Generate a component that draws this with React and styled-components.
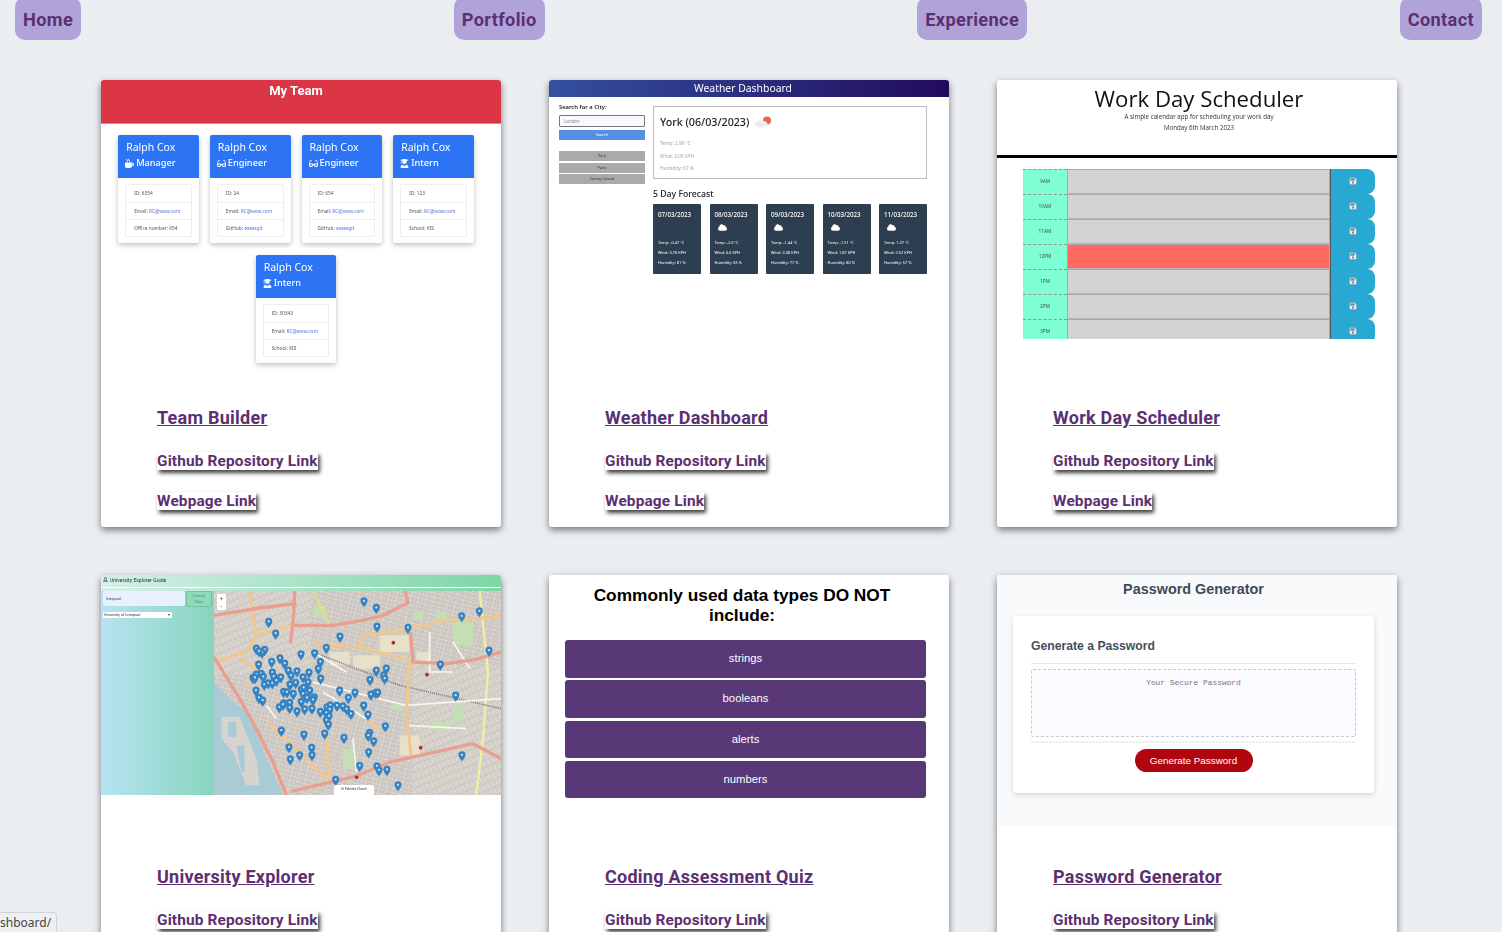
import React from 'react'
import styled, { createGlobalStyle } from 'styled-components'
import { FaMugHot, FaGlasses, FaUserGraduate, FaSave, FaCloud, FaRegUser } from 'react-icons/fa'

const GlobalStyle = createGlobalStyle`
    html, body {
        margin: 0;
        height: 932px;
        overflow: hidden;
        background: #ebeef1;
        font-family: Roboto, sans-serif;
    }
    * { box-sizing: border-box; }
`

const purple = '#5b2f72'

const Page = styled.div`
    height: 932px;
    overflow: hidden;
    position: relative;
`
const Nav = styled.nav`
    display: flex;
    justify-content: space-between;
    padding: 0 20px 0 15px;
    margin-top: -3px;
`
const NavButton = styled.a`
    height: 43px;
    padding: 2px 8px 0;
    display: flex;
    align-items: center;
    background: #b0a3d9;
    border-radius: 10px;
    color: ${purple};
    font: 700 18.2px Roboto, sans-serif;
    letter-spacing: 0.35px;
`
const Grid = styled.div`
    display: grid;
    grid-template-columns: repeat(3, 400px);
    gap: 48px;
    padding: 40px 0 0 101px;
`
const Card = styled.section`
    background: #fff;
    border-radius: 3px;
    height: 447px;
    box-shadow: 0 3px 7px rgba(0, 0, 0, 0.5);
    overflow: hidden;
`
const Shot = styled.div`
    height: ${(p) => p.$slot}px;
    overflow: hidden;
    filter: ${(p) => (p.$soft ? 'blur(0.35px)' : 'none')};
`
const CardText = styled.div`
    padding-left: 56px;
`
const ProjectTitle = styled.a`
    display: block;
    width: fit-content;
    color: ${purple};
    font-size: 18px;
    font-weight: 700;
    letter-spacing: 0.25px;
    line-height: 24px;
    text-decoration: underline;
    margin-bottom: 22px;
`
const ProjectLink = styled.a`
    display: block;
    width: fit-content;
    color: ${purple};
    background: #fff;
    font-size: 15.4px;
    font-weight: 700;
    letter-spacing: 0.15px;
    line-height: 18px;
    box-shadow: 2px 3px 4px rgba(0, 0, 0, 0.75);
    margin-bottom: 22px;
`

/* team builder */
const TeamHeader = styled.div`
    height: 44px;
    background: #dc3545;
    border-bottom: 1px solid #ee7a85;
    color: #fff;
    font: 700 13px Roboto, sans-serif;
    text-align: center;
    padding: 3px 10px 0 0;
`
const TeamWrap = styled.div`
    display: flex;
    flex-wrap: wrap;
    justify-content: center;
    gap: 12px 11px;
    padding: 11px 27px 0 17px;
`
const Person = styled.div`
    width: 80.7px;
    height: 108px;
    background: #fff;
    border-radius: 2px;
    box-shadow: 0 2px 5px rgba(0, 0, 0, 0.25);
`
const PersonHead = styled.div`
    height: 42.5px;
    background: #2d74f4;
    color: #fff;
    padding: 5px 8px 0;
    font-family: "Noto Sans", sans-serif;
    border-radius: 2px 2px 0 0;
`
const PersonName = styled.div`
    font-size: 10.5px;
    line-height: 15px;
`
const PersonRole = styled.div`
    display: flex;
    align-items: center;
    gap: 2px;
    font-size: 9.2px;
    font-weight: 500;
    line-height: 16px;
    margin-left: -1px;
`
const PersonList = styled.div`
    margin: 6px 7px 0;
    border: 1px solid #eee;
    border-radius: 2px;
`
const PersonLine = styled.div`
    height: 17px;
    padding-left: 8px;
    font: 4.8px/16px "Noto Sans", sans-serif;
    color: #555;
    white-space: nowrap;
    border-top: ${(p) => (p.$first ? 'none' : '1px solid #eee')};
    span { color: #4f74e0; }
`

/* weather */
const WeatherHeader = styled.div`
    height: 17px;
    background: linear-gradient(90deg, #34509f, #230b5c);
    color: #fff;
    font: 400 10.4px/16px "Noto Sans", sans-serif;
    text-align: center;
    padding-right: 12px;
`
const WeatherBody = styled.div`
    display: flex;
    gap: 8px;
    padding: 9px 22px 0 10px;
`
const WeatherSide = styled.div`
    width: 86px;
    margin-top: -3px;
`
const SideLabel = styled.div`
    font: 600 5.8px/9px "Noto Sans", sans-serif;
    color: #222;
    margin-bottom: 3px;
`
const CityInput = styled.div`
    height: 12px;
    border: 1px solid #777;
    border-radius: 1px;
    background: #f8f8ff;
    font: 4.4px/10px "Noto Sans", sans-serif;
    color: #888;
    padding-left: 4px;
    margin-bottom: 3px;
`
const SideButton = styled.div`
    height: ${(p) => p.$h}px;
    background: ${(p) => p.$bg};
    color: ${(p) => p.$fg};
    font: 3.8px/${(p) => p.$h}px "Noto Sans", sans-serif;
    text-align: center;
    margin-bottom: ${(p) => p.$mb}px;
`
const WeatherMain = styled.div`
    width: 274px;
`
const CurrentBox = styled.div`
    height: 73px;
    border: 1px solid #bdbdbd;
    padding: 7px 6px;
`
const CurrentTitle = styled.div`
    display: flex;
    align-items: center;
    gap: 5px;
    font: 500 10.7px/16px "Noto Sans", sans-serif;
    color: #222;
    margin-bottom: 7px;
`
const CurrentLine = styled.div`
    font: 4.8px/12.7px "Noto Sans", sans-serif;
    color: #a5a5a5;
`
const ForecastTitle = styled.div`
    font: 500 8.7px/12px "Noto Sans", sans-serif;
    color: #222;
    margin: 9px 0 4px;
`
const ForecastRow = styled.div`
    display: flex;
    justify-content: space-between;
`
const DayCard = styled.div`
    width: 48px;
    height: 70px;
    background: #2d3e50;
    border-radius: 1px;
    color: #fff;
    padding: 5px 5px 0;
`
const DayDate = styled.div`
    font: 500 6.2px/11px "Noto Sans", sans-serif;
    margin-bottom: 3px;
`
const DayIcon = styled.div`
    height: 9px;
    padding-left: 3px;
    margin-bottom: 6px;
    font-size: 9px;
    line-height: 9px;
`
const DayLine = styled.div`
    font: 3.9px/10px "Noto Sans", sans-serif;
    white-space: nowrap;
`
const DarkDot = styled.span`
    display: block;
    width: 5px;
    height: 5px;
    margin: 2px 0 0 2px;
    border-radius: 50%;
    background: #3b3f44;
`

/* scheduler */
const SchedHead = styled.div`
    height: 78px;
    border-bottom: 3px solid #000;
    text-align: center;
    color: #111;
    font-family: "Open Sans", sans-serif;
    padding: 6px 0 0 4px;
`
const SchedTitle = styled.div`
    font-size: 22.2px;
    line-height: 26px;
`
const SchedSub = styled.div`
    font-size: 6.2px;
    line-height: 10.5px;
    color: #333;
`
const SchedRows = styled.div`
    margin: 11px 22px 0 26px;
    height: 170px;
    overflow: hidden;
`
const SchedRow = styled.div`
    display: grid;
    grid-template-columns: 44px 1fr 45px;
    height: 25px;
`
const HourCell = styled.div`
    background: #7fffd4;
    border-top: 1px dashed #9a8f98;
    font: 4.8px/23px "Open Sans", sans-serif;
    color: #445;
    text-align: center;
`
const TaskCell = styled.div`
    background: ${(p) => (p.$now ? '#ff6961' : '#d3d3d3')};
    border: 1px solid #aaa;
    border-width: 1px 1px 0 1px;
    border-bottom: 1px solid #b5b5b5;
`
const SaveCell = styled.div`
    background: #27a9d3;
    border-radius: 0 8px 8px 0;
    border-left: 1px solid #555;
    display: flex;
    align-items: center;
    justify-content: center;
    color: #ececec;
    font-size: 8px;
    padding-bottom: 1px;
    svg { filter: drop-shadow(0 0 0.6px #334); }
`

/* university explorer */
const UniTop = styled.div`
    display: flex;
    align-items: flex-start;
    gap: 2px;
    height: 16px;
    background: linear-gradient(90deg, #d5efe9, #7ed6a5);
    color: #333;
    font: 5.1px/10px Roboto, sans-serif;
    padding: 0 0 0 2px;
    svg { margin-top: 2px; }
`
const UniRule = styled.div`
    height: 1px;
    margin-top: -4px;
    background: #fff;
    position: relative;
`
const UniBody = styled.div`
    display: flex;
    height: 204px;
    margin-top: 3px;
`
const UniSide = styled.div`
    width: 113px;
    background: linear-gradient(90deg, #b8e3f2, #86d5bd);
    padding: 0 2px;
`
const UniSearch = styled.div`
    display: flex;
    gap: 1px;
    margin-bottom: 5px;
`
const UniInput = styled.div`
    width: 82px;
    height: 15px;
    background: #e8f0fe;
    border-radius: 2px;
    font: 4px/15px Roboto, sans-serif;
    padding-left: 3px;
    color: #444;
`
const UniButton = styled.div`
    width: 26px;
    height: 16px;
    background: #8fd8b8;
    border: 1px solid #70c4a2;
    border-radius: 2px;
    font: 4.2px/6px Roboto, sans-serif;
    text-align: center;
    color: #3e9f85;
    padding-top: 1px;
`
const UniSelect = styled.div`
    display: flex;
    justify-content: space-between;
    width: 69px;
    height: 6px;
    background: #fff;
    font: 3.7px/6px Roboto, sans-serif;
    color: #333;
    padding: 0 2px 0 1px;
    white-space: nowrap;
`
const MapBox = styled.div`
    position: relative;
    width: 287px;
    height: 204px;
`
const MapSvg = styled.svg`
    display: block;
    width: 287px;
    height: 204px;
`
const MapPopup = styled.div`
    position: absolute;
    left: 120px;
    bottom: 0;
    width: 40px;
    height: 10px;
    background: #fff;
    border-radius: 2px 2px 0 0;
    font: 3.1px/9px Roboto, sans-serif;
    text-align: center;
    color: #333;
`
const ZoomBox = styled.div`
    position: absolute;
    left: 3px;
    top: 3px;
    width: 9px;
    height: 16px;
    background: #fff;
    border-radius: 1px;
    font: 5px/8px Roboto, sans-serif;
    text-align: center;
    color: #333;
`

/* quiz */
const QuizWrap = styled.div`
    padding: 11px 23px 0 16px;
`
const QuizTitle = styled.div`
    font: 700 17.3px/19.5px "Liberation Sans", sans-serif;
    color: #000;
    text-align: center;
    padding: 0 7px 0 0;
    margin-bottom: 15px;
`
const QuizOption = styled.div`
    height: 37.5px;
    background: #583877;
    border-radius: 3px;
    color: #fff;
    font: 11.3px/37px "Liberation Sans", sans-serif;
    text-align: center;
    margin-bottom: 2.8px;
`

/* password generator */
const PassWrap = styled.div`
    height: 251px;
    background: #f9fafc;
    padding: 0 23px 0 16px;
`
const PassTitle = styled.div`
    font: 700 14.4px/28px "Liberation Sans", sans-serif;
    color: #414a58;
    text-align: center;
    margin-bottom: 13px;
`
const PassCard = styled.div`
    height: 177px;
    background: #fff;
    border-radius: 3px;
    box-shadow: 0 2px 6px rgba(0, 0, 0, 0.15);
    padding: 18px 18px 0;
`
const PassHeading = styled.div`
    font: 700 12.2px/25px "Liberation Sans", sans-serif;
    color: #454e5c;
    height: 30px;
    border-bottom: 1px solid #e8e8e8;
    margin-bottom: 5px;
`
const PassArea = styled.div`
    height: 68px;
    border: 1px dashed #c8c8d6;
    border-radius: 2px;
    background: #fbfaff;
    font: 7.9px/26px "Liberation Mono", monospace;
    color: #777;
    text-align: center;
    margin-bottom: 4px;
`
const PassRule = styled.div`
    height: 2px;
    background: #f2f2f2;
    margin-bottom: 6px;
`
const PassButton = styled.div`
    width: 118px;
    height: 23px;
    margin: 0 auto;
    border-radius: 12px;
    background: #b00610;
    color: #fff;
    font: 9.9px/23px "Liberation Sans", sans-serif;
    text-align: center;
`

const StatusBubble = styled.div`
    position: absolute;
    left: 0;
    bottom: 0;
    width: 57px;
    height: 20px;
    background: #eef0f3;
    border: 1px solid #cfd2d6;
    border-width: 1px 1px 0 0;
    border-radius: 0 4px 0 0;
    font: 12px/20px "Noto Sans", sans-serif;
    color: #444;
    text-align: right;
    padding-right: 7px;
    overflow: hidden;
    white-space: nowrap;
`

const people = [
    { role: 'Manager', Icon: FaMugHot, id: '6354', last: 'Office number: 654' },
    { role: 'Engineer', Icon: FaGlasses, id: '24', last: 'GitHub: ', link: 'essesgit' },
    { role: 'Engineer', Icon: FaGlasses, id: '654', last: 'GitHub: ', link: 'essesgit' },
    { role: 'Intern', Icon: FaUserGraduate, id: '123', last: 'School: KIS' },
    { role: 'Intern', Icon: FaUserGraduate, id: '30343', last: 'School: KIS' },
]

function TeamShot() {
    return (
        <>
            <TeamHeader>My Team</TeamHeader>
            <TeamWrap>
                {people.map((p, i) => (
                    <Person key={i}>
                        <PersonHead>
                            <PersonName>Ralph Cox</PersonName>
                            <PersonRole><p.Icon size={9} />{p.role}</PersonRole>
                        </PersonHead>
                        <PersonList>
                            <PersonLine $first>ID: {p.id}</PersonLine>
                            <PersonLine>Email: <span>RC@wow.com</span></PersonLine>
                            <PersonLine>{p.last}{p.link && <span>{p.link}</span>}</PersonLine>
                        </PersonList>
                    </Person>
                ))}
            </TeamWrap>
        </>
    )
}

const days = [
    { date: '07/03/2023', temp: '-0.47', wind: '3.76', hum: '81', dark: true },
    { date: '08/03/2023', temp: '-2.0', wind: '6.6', hum: '65' },
    { date: '09/03/2023', temp: '-1.44', wind: '3.08', hum: '77' },
    { date: '10/03/2023', temp: '-1.51', wind: '1.87', hum: '80' },
    { date: '11/03/2023', temp: '1.37', wind: '2.52', hum: '57' },
]

function WeatherShot() {
    return (
        <>
            <WeatherHeader>Weather Dashboard</WeatherHeader>
            <WeatherBody>
                <WeatherSide>
                    <SideLabel>Search for a City:</SideLabel>
                    <CityInput>London</CityInput>
                    <SideButton $h={10} $bg="#5591e0" $fg="#fff" $mb={11}>Search</SideButton>
                    <SideButton $h={10} $bg="#aaa" $fg="#333" $mb={2}>York</SideButton>
                    <SideButton $h={10} $bg="#aaa" $fg="#333" $mb={1}>Paris</SideButton>
                    <SideButton $h={10} $bg="#aaa" $fg="#333" $mb={0}>Canary Island</SideButton>
                </WeatherSide>
                <WeatherMain>
                    <CurrentBox>
                        <CurrentTitle>
                            York (06/03/2023)
                            <svg width="18" height="12" viewBox="0 0 18 12">
                                <circle cx="13" cy="4.5" r="4" fill="#e8674a" />
                                <ellipse cx="7" cy="8" rx="6.5" ry="3.5" fill="#eee" />
                            </svg>
                        </CurrentTitle>
                        <CurrentLine>Temp: 2.96 °C</CurrentLine>
                        <CurrentLine>Wind: 2.05 KPH</CurrentLine>
                        <CurrentLine>Humidity: 67 %</CurrentLine>
                    </CurrentBox>
                    <ForecastTitle>5 Day Forecast</ForecastTitle>
                    <ForecastRow>
                        {days.map((d) => (
                            <DayCard key={d.date}>
                                <DayDate>{d.date}</DayDate>
                                <DayIcon>{d.dark ? <DarkDot /> : <FaCloud />}</DayIcon>
                                <DayLine>Temp: {d.temp} °C</DayLine>
                                <DayLine>Wind: {d.wind} KPH</DayLine>
                                <DayLine>Humidity: {d.hum} %</DayLine>
                            </DayCard>
                        ))}
                    </ForecastRow>
                </WeatherMain>
            </WeatherBody>
        </>
    )
}

const hours = ['9AM', '10AM', '11AM', '12PM', '1PM', '2PM', '3PM']

function SchedulerShot() {
    return (
        <>
            <SchedHead>
                <SchedTitle>Work Day Scheduler</SchedTitle>
                <SchedSub>A simple calendar app for scheduling your work day</SchedSub>
                <SchedSub>Monday 6th March 2023</SchedSub>
            </SchedHead>
            <SchedRows>
                {hours.map((h) => (
                    <SchedRow key={h}>
                        <HourCell>{h}</HourCell>
                        <TaskCell $now={h === '12PM'} />
                        <SaveCell><FaSave /></SaveCell>
                    </SchedRow>
                ))}
            </SchedRows>
        </>
    )
}

// pin tips read off the reference, in map viewBox units
const pins = [
    [793, 90], [830, 110], [1086, 135], [1139, 120], [832, 166], [925, 170], [507, 152], [528, 187],
    [721, 196], [680, 230], [645, 246], [604, 249], [470, 232], [495, 236], [487, 244], [478, 240],
    [1168, 238], [1022, 280], [541, 261], [516, 272], [477, 280], [555, 277], [662, 272], [656, 293],
    [628, 304], [592, 300], [566, 298], [574, 313], [610, 318], [830, 298], [860, 292], [852, 312],
    [855, 322], [811, 326], [663, 322], [625, 333], [588, 335], [571, 340], [543, 318], [518, 304],
    [522, 316], [485, 308], [470, 310], [460, 320], [466, 320], [491, 317], [494, 340], [506, 336],
    [518, 336], [530, 328], [469, 358], [478, 380], [489, 388], [552, 362], [562, 363], [581, 368],
    [605, 355], [612, 350], [630, 358], [610, 368], [622, 380], [644, 378], [640, 386], [605, 392],
    [553, 396], [570, 395], [539, 408], [550, 400], [570, 410], [592, 420], [615, 414], [637, 412],
    [662, 422], [682, 408], [692, 402], [690, 415], [712, 403], [730, 405], [741, 414], [754, 428],
    [792, 403], [805, 430], [720, 358], [766, 364], [746, 380], [814, 370], [828, 365], [834, 364],
    [1068, 373], [680, 425], [688, 435], [680, 447], [686, 460], [857, 465], [545, 478], [613, 490],
    [675, 487], [733, 500], [810, 485], [806, 493], [822, 510], [568, 528], [636, 530], [637, 552],
    [600, 552], [572, 564], [807, 543], [780, 584], [832, 585], [838, 597], [862, 596], [708, 626],
    [895, 642], [1087, 552],
]
const redDots = [[881, 212], [982, 308], [963, 527], [771, 616]]
const salmonRoads = [
    'M343 130 L480 108 L590 95',
    'M575 160 L700 160 L790 145 L850 130 L925 92 L915 57',
    'M343 255 L420 380 L470 470 L520 570 L560 668',
    'M575 658 L770 612 L870 570 L1120 515 L1204 560',
    'M932 180 L940 270 L1040 275 L1130 262 L1204 240',
    'M585 57 L582 130 L572 215',
]
const orangeRoads = [
    'M640 215 L780 225 L930 265',
    'M780 220 L790 190 L930 170 L1040 145 L1204 135',
    'M930 270 L920 420 L935 560',
    'M500 450 L600 540 L680 620',
    'M680 480 L690 620',
    'M343 270 L440 240 L470 190 L572 160',
    'M800 440 L840 470',
    'M420 260 L480 300 L440 340',
    'M450 57 L470 190',
]
const whiteRoads = [
    'M640 330 L920 400 L1204 380',
    'M740 300 L640 240',
    'M760 500 L770 600',
    'M920 460 L1100 470',
    'M990 180 L990 300 L1060 300',
    'M670 360 L800 440',
    'M1060 210 L1110 290',
    'M500 400 L530 440',
]
const greens = [
    [1060, 150, 60, 70], [1000, 450, 50, 30], [880, 395, 30, 20], [940, 120, 30, 25],
    [730, 530, 30, 60], [640, 100, 40, 35], [1060, 400, 30, 50], [1010, 120, 30, 20],
]
const creams = [
    [840, 190, 90, 50], [950, 240, 40, 30], [760, 250, 80, 40], [900, 490, 60, 60], [690, 240, 60, 40],
]

function MapDrawing() {
    return (
        <MapSvg viewBox="343 57 861 612" preserveAspectRatio="none">
            <defs>
                <pattern id="blocks" width="22" height="13" patternUnits="userSpaceOnUse" patternTransform="rotate(14)">
                    <rect width="22" height="13" fill="#dcd7d2" />
                    <path d="M0 4H22M0 9H22M8 0V13M17 0V13" stroke="#bdb7b2" strokeWidth="1.8" />
                </pattern>
                <pattern id="blocksB" width="14" height="22" patternUnits="userSpaceOnUse" patternTransform="rotate(-22)">
                    <rect width="14" height="22" fill="#dfdad4" />
                    <path d="M4 0V22M10 0V22M0 9H14" stroke="#bfb9b3" strokeWidth="1.8" />
                </pattern>
            </defs>
            <rect x="343" y="57" width="861" height="612" fill="url(#blocks)" />
            <rect x="343" y="57" width="290" height="250" fill="url(#blocksB)" />
            <rect x="940" y="280" width="264" height="388" fill="url(#blocksB)" />
            {creams.map(([x, y, w, h]) => (
                <rect key={x} x={x} y={y} width={w} height={h} fill="#e8e0c9" />
            ))}
            {greens.map(([x, y, w, h]) => (
                <rect key={x} x={x} y={y} width={w} height={h} fill="#c4dfb4" />
            ))}
            <path d="M343 330 L400 390 L440 420 L470 480 L500 560 L550 668 L343 668 Z" fill="#a9cbd6" />
            <path d="M365 435 H420 L470 560 L480 640 H440 L400 540 L365 500 Z" fill="#d8d3cf" />
            <path d="M385 450 H410 V495 H385 Z M410 520 H435 V600 H425 Z" fill="#a9cbd6" />
            <path d="M640 57 L690 160" stroke="#d9df8f" strokeWidth="8" fill="none" />
            <path d="M1140 57 L1165 300 L1150 500 L1130 668" stroke="#f2eea6" strokeWidth="7" fill="none" />
            <path d="M640 240 L900 340 L1204 410" stroke="#7d7d7d" strokeWidth="5" strokeDasharray="3 3" fill="none" />
            {whiteRoads.map((d) => <path key={d} d={d} stroke="#f7f6f3" strokeWidth="5" fill="none" />)}
            {orangeRoads.map((d) => <path key={d} d={d} stroke="#f2c78d" strokeWidth="9" fill="none" />)}
            {salmonRoads.map((d) => <path key={d} d={d} stroke="#e99f8d" strokeWidth="10" fill="none" />)}
            {redDots.map(([x, y]) => <circle key={x} cx={x} cy={y} r="5.5" fill="#c3242f" />)}
            {pins.map(([x, y]) => (
                <g key={`${x}-${y}`} transform={`translate(${x} ${y}) scale(1.2)`}>
                    <path d="M0 14 C-3 7 -9 4 -9 -3 A9 9 0 0 1 9 -3 C9 4 3 7 0 14 Z" fill="#3583c2" />
                    <circle cx="0" cy="-3" r="2.8" fill="#d6e6f3" />
                </g>
            ))}
        </MapSvg>
    )
}

function UniversityShot() {
    return (
        <>
            <UniTop><FaRegUser size={5} />University Explorer Guide</UniTop>
            <UniRule />
            <UniBody>
                <UniSide>
                    <UniSearch>
                        <UniInput>liverpool</UniInput>
                        <UniButton>Search<br />Now</UniButton>
                    </UniSearch>
                    <UniSelect>University of Liverpool<span>▾</span></UniSelect>
                </UniSide>
                <MapBox>
                    <MapDrawing />
                    <ZoomBox>+<br />−</ZoomBox>
                    <MapPopup>St Patrick's Church</MapPopup>
                </MapBox>
            </UniBody>
        </>
    )
}

function QuizShot() {
    return (
        <QuizWrap>
            <QuizTitle>Commonly used data types DO NOT include:</QuizTitle>
            {['strings', 'booleans', 'alerts', 'numbers'].map((o) => (
                <QuizOption key={o}>{o}</QuizOption>
            ))}
        </QuizWrap>
    )
}

function PasswordShot() {
    return (
        <PassWrap>
            <PassTitle>Password Generator</PassTitle>
            <PassCard>
                <PassHeading>Generate a Password</PassHeading>
                <PassArea>Your Secure Password</PassArea>
                <PassRule />
                <PassButton>Generate Password</PassButton>
            </PassCard>
        </PassWrap>
    )
}

const projects = [
    { title: 'Team Builder', slot: 326, soft: true, Art: TeamShot },
    { title: 'Weather Dashboard', slot: 326, soft: true, Art: WeatherShot },
    { title: 'Work Day Scheduler', slot: 326, soft: true, Art: SchedulerShot },
    { title: 'University Explorer', slot: 290, soft: true, Art: UniversityShot },
    { title: 'Coding Assessment Quiz', slot: 290, Art: QuizShot },
    { title: 'Password Generator', slot: 290, Art: PasswordShot },
]

export default function App() {
    return (
        <Page>
            <GlobalStyle />
            <Nav>
                {['Home', 'Portfolio', 'Experience', 'Contact'].map((n) => (
                    <NavButton key={n}>{n}</NavButton>
                ))}
            </Nav>
            <Grid>
                {projects.map(({ title, slot, soft, Art }) => (
                    <Card key={title}>
                        <Shot $slot={slot} $soft={soft}><Art /></Shot>
                        <CardText>
                            <ProjectTitle>{title}</ProjectTitle>
                            <ProjectLink>Github Repository Link</ProjectLink>
                            <ProjectLink>Webpage Link</ProjectLink>
                        </CardText>
                    </Card>
                ))}
            </Grid>
            <StatusBubble>shboard/</StatusBubble>
        </Page>
    )
}
